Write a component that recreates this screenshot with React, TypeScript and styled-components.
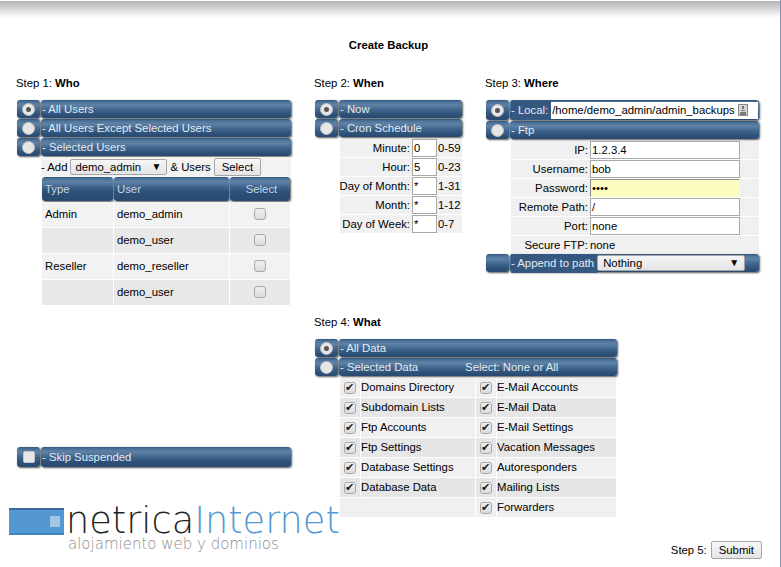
import { Fragment, ReactNode } from "react";
import styled, { createGlobalStyle } from "styled-components";

const GlobalStyle = createGlobalStyle`
  html, body {
    margin: 0;
    padding: 0;
    background: #fff;
  }
  body {
    font-family: "Liberation Sans", Arial, sans-serif;
    font-size: 11.33px;
    color: #000;
  }
`;

const Page = styled.div`
  width: 781px;
  height: 567px;
  box-sizing: border-box;
  border-right: 1px solid #8494b4;
  overflow: hidden;
  background: linear-gradient(#fff 0, #fff 1px, #b4b4b4 1px, #fff 18px) no-repeat;
  background-size: 100% 20px;
  display: flex;
  flex-direction: column;
`;

const Title = styled.h1`
  margin: 39px 0 0;
  height: 12px;
  line-height: 12px;
  font-size: 11.33px;
  font-weight: 700;
  text-align: center;
  padding-right: 3px;
`;

const Columns = styled.div`
  display: grid;
  grid-template-columns: 298px 171px 1fr;
  padding-left: 16px;
  margin-top: 26px;
`;

const Column = styled.div`
  display: flex;
  flex-direction: column;
`;

const StepLabel = styled.div<{ $top?: number }>`
  height: 12px;
  line-height: 12px;
  margin-top: ${(p) => p.$top || 0}px;
  margin-bottom: 11px;
  b {
    font-weight: 700;
  }
`;

const Options = styled.div<{ $width: number }>`
  width: ${(p) => p.$width}px;
  margin-left: 1px;
  display: flex;
  flex-direction: column;
`;

const OptionRow = styled.div<{ $height?: number }>`
  display: flex;
  height: ${(p) => p.$height || 19}px;
  gap: 1px;
`;

const barFill = `
  background: linear-gradient(#30557d 0, #4f7499 2px, #5f82a6 5px, #3f658d 10px, #2c5078 15px, #2a4a70 100%);
  border-radius: 3px;
  box-shadow: 1px 1px 2px rgba(0, 0, 0, 0.65);
  color: #e4eaf2;
`;

const RadioCell = styled.div`
  ${barFill}
  width: 23px;
  height: calc(100% - 1px);
  flex: none;
  display: flex;
  align-items: center;
  justify-content: center;
`;

const Bar = styled.div`
  ${barFill}
  flex: 1;
  height: calc(100% - 1px);
  min-width: 0;
  padding-left: 1px;
  line-height: 18px;
  display: flex;
  align-items: center;
  white-space: pre;
`;

const BarAside = styled.span`
  margin-left: 47px;
`;

const Radio = styled.input.attrs({ type: "radio" })`
  appearance: none;
  margin: 0;
  width: 13px;
  height: 13px;
  border-radius: 50%;
  background: #e6e6e6;
  border: 1px solid #c0c0c0;
  box-sizing: border-box;
  display: flex;
  align-items: center;
  justify-content: center;
  &:checked::after {
    content: "";
    width: 5px;
    height: 5px;
    border-radius: 50%;
    background: #555;
  }
`;

const BarBox = styled.input.attrs({ type: "checkbox" })`
  appearance: none;
  margin: 0;
  width: 12px;
  height: 12px;
  border-radius: 2px;
  background: #e6e6e6;
  border: 1px solid #c4c4c4;
  box-sizing: border-box;
`;

const Check = styled.input.attrs({ type: "checkbox" })`
  appearance: none;
  margin: 0;
  width: 12px;
  height: 12px;
  border-radius: 3px;
  background: linear-gradient(#f0f0f0, #dcdcdc);
  border: 1px solid #a8a8a8;
  box-sizing: border-box;
  position: relative;
  &:checked::after {
    content: "✔";
    position: absolute;
    left: 0;
    top: -1px;
    font: 11px/11px "DejaVu Sans", sans-serif;
    color: #222;
  }
`;

const Select = styled.div<{ $width: number; $inset: number }>`
  width: ${(p) => p.$width}px;
  height: 16px;
  box-sizing: border-box;
  flex: none;
  display: flex;
  align-items: center;
  justify-content: space-between;
  padding: 0 5px 0 ${(p) => p.$inset}px;
  background: linear-gradient(#f6f6f6, #e4e4e4);
  border: 1px solid #a6a6a6;
  border-radius: 2px;
  color: #000;
  span:last-child {
    font-size: 10px;
  }
`;

const Button = styled.button`
  font: inherit;
  color: #000;
  height: 18px;
  padding: 0 7px;
  background: linear-gradient(#f8f8f8, #e4e4e4);
  border: 1px solid #a6a6a6;
  border-radius: 2px;
`;

const AddRow = styled.div`
  margin-left: 24px;
  height: 19px;
  background: #f2f2f2;
  display: flex;
  align-items: center;
  gap: 3px;
`;

const UsersTable = styled.div`
  margin: 1px 0 0 25px;
  display: grid;
  grid-template-columns: 71px 115px 60px;
  gap: 1px;
`;

const HeadCell = styled.div<{ $center?: boolean }>`
  ${barFill}
  height: 24px;
  line-height: 24px;
  padding-left: 3px;
  box-sizing: border-box;
  color: #c9d5e2;
  text-align: ${(p) => (p.$center ? "center" : "left")};
`;

const BodyCell = styled.div<{ $alt?: boolean; $center?: boolean }>`
  height: 25px;
  box-sizing: border-box;
  background: ${(p) => (p.$alt ? "#e8e8e8" : "#f2f2f2")};
  display: flex;
  align-items: center;
  padding: 0 0 2px ${(p) => (p.$center ? 0 : 3)}px;
  justify-content: ${(p) => (p.$center ? "center" : "flex-start")};
`;

const FormRows = styled.div<{ $columns: string }>`
  margin: 1px 0 0 25px;
  display: grid;
  grid-template-columns: ${(p) => p.$columns};
  row-gap: 1px;
`;

const FormLabel = styled.div`
  height: 18px;
  background: #f0f0f0;
  display: flex;
  align-items: center;
  justify-content: flex-end;
  padding-right: 2px;
  white-space: nowrap;
`;

const FormCell = styled.div`
  height: 18px;
  background: #f0f0f0;
  display: flex;
  align-items: center;
  white-space: nowrap;
`;

const TextInput = styled.input.attrs({ type: "text" })<{ $width: number }>`
  font: inherit;
  color: #000;
  width: ${(p) => p.$width}px;
  height: 18px;
  box-sizing: border-box;
  padding: 0 1px;
  margin: 0;
  background: #fff;
  border: 1px solid #a9a9a9;
`;

const PasswordInput = styled(TextInput).attrs({ type: "password" })`
  background: #fbfdc0;
  border-color: #8e8e8e #fbfdc0 #fbfdc0 #8e8e8e;
`;

const PathInput = styled.div`
  flex: 1;
  height: 17px;
  margin: 0 1px 0 0;
  background: #fff;
  color: #000;
  display: flex;
  align-items: center;
  gap: 3px;
  padding-left: 1px;
`;

const FolderButton = styled.span`
  width: 10px;
  height: 12px;
  box-sizing: border-box;
  background: #d8d8d8;
  border: 1px solid #8a8a8a;
  display: flex;
  align-items: center;
  justify-content: center;
  svg {
    display: block;
  }
`;

const BarLabel = styled.span`
  background: #34587f;
  line-height: 19px;
  padding-right: 3px;
`;

const DataGrid = styled.div`
  margin: 1px 0 0 25px;
  display: grid;
  grid-template-columns: 20px 114px 20px 119px;
  gap: 0 1px;
`;

const DataCheck = styled.div<{ $alt?: boolean }>`
  height: 19px;
  margin-bottom: 1px;
  background: ${(p) => (p.$alt ? "#e6e6e6" : "#f0f0f0")};
  display: flex;
  align-items: center;
  justify-content: center;
`;

const DataLabel = styled.div<{ $alt?: boolean }>`
  height: 19px;
  margin-bottom: 1px;
  line-height: 19px;
  background: ${(p) => (p.$alt ? "#e6e6e6" : "#f0f0f0")};
`;

const EmptyData = styled(DataLabel)`
  grid-column: span 2;
`;

const LowerRow = styled.div`
  display: grid;
  grid-template-columns: 298px 350px 1fr;
  padding-left: 16px;
`;

const LeftLower = styled.div`
  display: flex;
  flex-direction: column;
  padding: 142px 0 7px;
`;

const Logo = styled.div`
  margin: 39px 0 0 -7px;
  display: grid;
  grid-template-columns: 55px 1fr;
  column-gap: 2px;
`;

const LogoMark = styled.div`
  width: 55px;
  height: 27px;
  margin-top: 1px;
  box-sizing: border-box;
  background: #5398d2;
  border-top: 2px solid #3b6c9c;
  border-bottom: 2px solid #3f85c0;
  display: flex;
  align-items: center;
  justify-content: flex-end;
  padding-right: 4px;
  span {
    width: 10px;
    height: 11px;
    background: #a5c7e4;
  }
`;

const LogoName = styled.div`
  font-family: "DejaVu Sans", sans-serif;
  font-weight: 200;
  font-size: 36.7px;
  line-height: 28px;
  color: #222;
  white-space: nowrap;
  span {
    color: #5398d2;
  }
`;

const LogoTagline = styled.div`
  grid-column: 2;
  margin: 1px 0 0 2px;
  font-family: "DejaVu Sans", sans-serif;
  font-weight: 200;
  font-size: 15px;
  line-height: 16px;
  color: #8c8c8c;
  white-space: nowrap;
`;

const Footer = styled.div`
  align-self: end;
  display: flex;
  align-items: center;
  justify-content: flex-end;
  gap: 4px;
  padding-right: 18px;
  white-space: nowrap;
`;

const whoRows = [
  ["Admin", "demo_admin"],
  ["", "demo_user"],
  ["Reseller", "demo_reseller"],
  ["", "demo_user"],
];

const cronRows = [
  ["Minute:", "0", "0-59"],
  ["Hour:", "5", "0-23"],
  ["Day of Month:", "*", "1-31"],
  ["Month:", "*", "1-12"],
  ["Day of Week:", "*", "0-7"],
];

const ftpRows = [
  ["IP:", "1.2.3.4"],
  ["Username:", "bob"],
  ["Password:", "1234"],
  ["Remote Path:", "/"],
  ["Port:", "none"],
];

const dataRows = [
  ["Domains Directory", "E-Mail Accounts"],
  ["Subdomain Lists", "E-Mail Data"],
  ["Ftp Accounts", "E-Mail Settings"],
  ["Ftp Settings", "Vacation Messages"],
  ["Database Settings", "Autoresponders"],
  ["Database Data", "Mailing Lists"],
  ["", "Forwarders"],
];

const Option = ({
  name,
  checked,
  height,
  label,
}: {
  name: string;
  checked?: boolean;
  height?: number;
  label: ReactNode;
}) => (
  <OptionRow $height={height}>
    <RadioCell>
      <Radio name={name} defaultChecked={checked} />
    </RadioCell>
    <Bar>{label}</Bar>
  </OptionRow>
);

const App = () => {
  return (
    <Page>
      <GlobalStyle />
      <Title>Create Backup</Title>
      <Columns>
        <Column>
          <StepLabel>
            Step 1: <b>Who</b>
          </StepLabel>
          <Options $width={274}>
            <Option name="who" checked label="- All Users" />
            <Option name="who" label="- All Users Except Selected Users" />
            <Option name="who" label="- Selected Users" />
            <AddRow>
              - Add
              <Select $width={97} $inset={4}>
                <span>demo_admin</span>
                <span>▼</span>
              </Select>
              & Users
              <Button>Select</Button>
            </AddRow>
            <UsersTable>
              <HeadCell>Type</HeadCell>
              <HeadCell>User</HeadCell>
              <HeadCell $center>Select</HeadCell>
              {whoRows.map(([type, user], i) => (
                <Fragment key={i}>
                  <BodyCell $alt={i % 2 === 1}>{type}</BodyCell>
                  <BodyCell $alt={i % 2 === 1}>{user}</BodyCell>
                  <BodyCell $alt={i % 2 === 1} $center>
                    <Check />
                  </BodyCell>
                </Fragment>
              ))}
            </UsersTable>
          </Options>
        </Column>
        <Column>
          <StepLabel>
            Step 2: <b>When</b>
          </StepLabel>
          <Options $width={147}>
            <Option name="when" checked label="- Now" />
            <Option name="when" label="- Cron Schedule" />
            <FormRows $columns="72px 26px 24px">
              {cronRows.map(([label, value, range]) => (
                <Fragment key={label}>
                  <FormLabel>{label}</FormLabel>
                  <FormCell>
                    <TextInput $width={25} defaultValue={value} />
                  </FormCell>
                  <FormCell>{range}</FormCell>
                </Fragment>
              ))}
            </FormRows>
          </Options>
        </Column>
        <Column>
          <StepLabel>
            Step 3: <b>Where</b>
          </StepLabel>
          <Options $width={273}>
            <Option
              name="where"
              checked
              height={21}
              label={
                <>
                  <BarLabel>- Local:</BarLabel>
                  <PathInput>
                    /home/demo_admin/admin_backups
                    <FolderButton>
                      <svg width="6" height="9" viewBox="0 0 6 9">
                        <path d="M2 0h2v3H2zM1 4h4v1H1zM0 6h6v3H0z" fill="#777" />
                      </svg>
                    </FolderButton>
                  </PathInput>
                </>
              }
            />
            <Option name="where" label="- Ftp" />
            <FormRows $columns="79px 151px 18px">
              {ftpRows.map(([label, value]) => (
                <Fragment key={label}>
                  <FormLabel>{label}</FormLabel>
                  <FormCell>
                    {label === "Password:" ? (
                      <PasswordInput $width={150} defaultValue={value} />
                    ) : (
                      <TextInput $width={150} defaultValue={value} />
                    )}
                  </FormCell>
                  <FormCell />
                </Fragment>
              ))}
              <FormLabel>Secure FTP:</FormLabel>
              <FormCell>none</FormCell>
              <FormCell />
            </FormRows>
            <OptionRow>
              <RadioCell />
              <Bar>
                <BarLabel>- Append to path</BarLabel>
                <Select $width={148} $inset={5}>
                  <span>Nothing</span>
                  <span>▼</span>
                </Select>
              </Bar>
            </OptionRow>
          </Options>
        </Column>
      </Columns>
      <LowerRow>
        <LeftLower>
          <Options $width={274}>
            <OptionRow $height={21}>
              <RadioCell>
                <BarBox />
              </RadioCell>
              <Bar>- Skip Suspended</Bar>
            </OptionRow>
          </Options>
          <Logo>
            <LogoMark>
              <span />
            </LogoMark>
            <LogoName>
              netrica<span>Internet</span>
            </LogoName>
            <LogoTagline>alojamiento web y dominios</LogoTagline>
          </Logo>
        </LeftLower>
        <Column>
          <StepLabel $top={11}>
            Step 4: <b>What</b>
          </StepLabel>
          <Options $width={302}>
            <Option name="what" checked label="- All Data" />
            <Option
              name="what"
              label={
                <>
                  - Selected Data
                  <BarAside>Select: None or All</BarAside>
                </>
              }
            />
            <DataGrid>
              {dataRows.map(([left, right], i) => (
                <Fragment key={right}>
                  {left ? (
                    <>
                      <DataCheck $alt={i % 2 === 1}>
                        <Check defaultChecked />
                      </DataCheck>
                      <DataLabel $alt={i % 2 === 1}>{left}</DataLabel>
                    </>
                  ) : (
                    <EmptyData $alt={i % 2 === 1} />
                  )}
                  <DataCheck $alt={i % 2 === 1}>
                    <Check defaultChecked />
                  </DataCheck>
                  <DataLabel $alt={i % 2 === 1}>{right}</DataLabel>
                </Fragment>
              ))}
            </DataGrid>
          </Options>
        </Column>
        <Footer>
          Step 5:
          <Button>Submit</Button>
        </Footer>
      </LowerRow>
    </Page>
  );
};

export default App;
